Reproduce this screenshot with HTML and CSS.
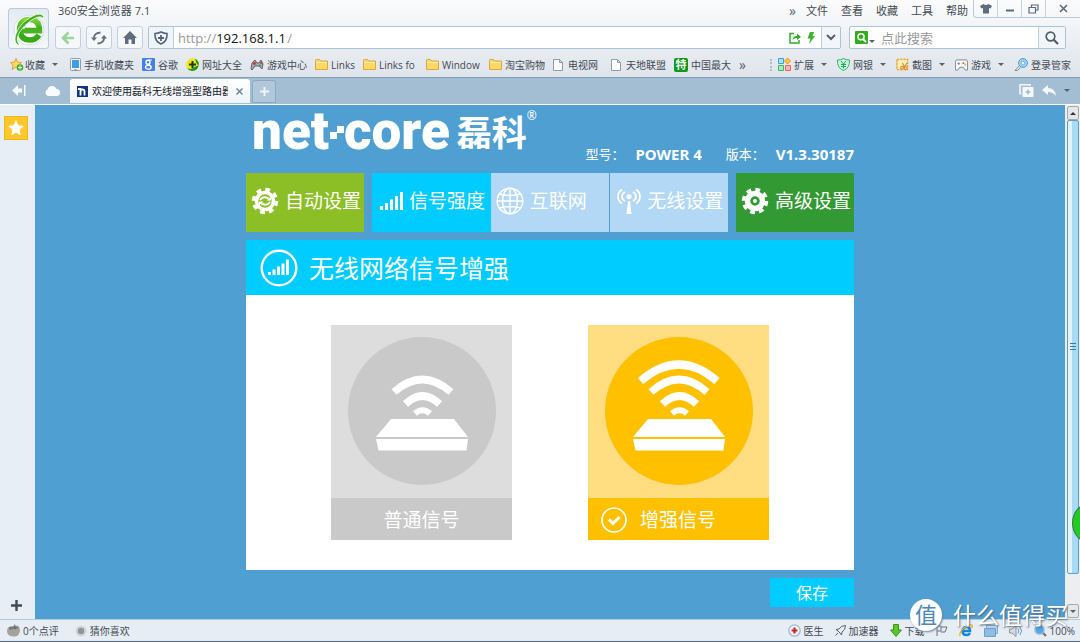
FILE: index.html
```html
<!DOCTYPE html>
<html lang="zh-CN">
<head>
<meta charset="utf-8">
<title>欢迎使用磊科无线增强型路由器</title>
<link rel="stylesheet" href="styles.css">
</head>
<body>
<svg class="defs" aria-hidden="true">
  <symbol id="folder" viewBox="0 0 13 11"><path d="M.5 10.5V1.3Q.5.5 1.300.5H4.500L5.700 2H12.500V10.500Z" fill="#fbd868" stroke="#dda93c"/><path d="M1 3.500H12" stroke="#ffedaa"/></symbol>
  <symbol id="page" viewBox="0 0 10 12"><path d="M.5.5H6.500L9.500 3.500V11.500H.5ZM6.500.5V3.500H9.500" fill="#fdfdfd" stroke="#929aa2"/></symbol>
  <symbol id="router" viewBox="0 0 92 32"><path d="M15 0H78L92 18H0ZM0 20H92L90.500 31.500H2.500Z" fill="#fff"/></symbol>
</svg>

<header class="browser">
  <button class="brand" aria-label="360">
    <svg width="32" height="34" viewBox="0 0 32 34"><defs><linearGradient id="eg" x2="0" y2="1"><stop stop-color="#7fd13a"/><stop offset="1" stop-color="#2fa512"/></linearGradient></defs><circle cx="16" cy="18" r="15" fill="#fff" stroke="#d5dee6"/><path d="M6.500 18.500Q6.500 7.500 16.500 7.500Q26.500 7.500 26.500 18.500H12" fill="none" stroke="url(#eg)" stroke-width="5.500"/><path d="M7 17Q7 28 17 28Q23 28 26 23" fill="none" stroke="#36ab17" stroke-width="5.500"/><path d="M8 19H29" stroke="#48b522" stroke-width="4.500"/><path d="M5 33C-2 29 4 14 15 7C23 1 31 0 31 7C28 3 22 5 15 11C6 18 1 28 7 33Z" fill="#41b01d" stroke="#fff" stroke-width=".8"/></svg>
  </button>
  <div class="title-row">
    <span class="app-title">360安全浏览器 7.1</span>
    <nav class="menu">
      <button class="more">»</button><button>文件</button><button>查看</button><button>收藏</button><button>工具</button><button>帮助</button>
    </nav>
    <div class="window-controls">
      <button aria-label="皮肤"><svg width="12" height="10" viewBox="0 0 12 10"><path d="M0 2L3.500 0Q6 2 8.500 0L12 2L10.500 4.500L9 4V9.500H3V4L1.500 4.500Z" fill="#5d6b7e"/></svg></button>
      <button aria-label="最小化"><svg width="10" height="10" viewBox="0 0 10 10"><path d="M1 6.500H9" stroke="#5d6b7e" stroke-width="2"/></svg></button>
      <button aria-label="还原"><svg width="11" height="10" viewBox="0 0 11 10"><path d="M3.500 3V1H10V6H8M1 3.500H7.500V9H1Z" fill="none" stroke="#5d6b7e" stroke-width="1.200"/></svg></button>
      <button class="close" aria-label="关闭"><svg width="9" height="9" viewBox="0 0 9 9"><path d="M1 1L8 8M8 1L1 8" stroke="#5d6b7e" stroke-width="1.600"/></svg></button>
    </div>
  </div>
  <div class="address-row">
    <button class="tool" aria-label="后退"><svg width="14" height="14" viewBox="0 0 14 14"><path d="M13 7H2M7.500 1.500L2 7L7.500 12.500" fill="none" stroke="#9bd39a" stroke-width="2.600"/></svg></button>
    <button class="tool" aria-label="刷新"><svg width="16" height="14" viewBox="0 0 16 14"><path d="M2.800 8.500Q2.500 1.800 9.500 1.500M13.200 5.500Q13.500 12.200 6.500 12.500" fill="none" stroke="#5f6c7d" stroke-width="1.800"/><path d="M0 6.500H6L3 10ZM10 7.500H16L13 4Z" fill="#5f6c7d"/></svg></button>
    <button class="tool" aria-label="主页"><svg width="14" height="13" viewBox="0 0 14 13"><path d="M7 0L14 7H12V13H8.500V8.500H5.500V13H2V7H0Z" fill="#5f6c7d"/></svg></button>
    <div class="address">
      <span class="shield"><svg width="14" height="14" viewBox="0 0 14 14"><path d="M7 1Q10 2.500 13 2.500Q13.500 10.500 7 13Q.5 10.500 1 2.500Q4 2.500 7 1Z" fill="none" stroke="#55657d" stroke-width="1.600"/><path d="M7 4V10M4 7H10" stroke="#55657d" stroke-width="1.800"/></svg></span>
      <label class="scheme" for="url">http://</label><input id="url" class="url" value="192.168.1.1"><span class="scheme">/</span>
      <span class="address-icons">
        <svg width="12" height="12" viewBox="0 0 12 12"><path d="M5 1.500H1V11H10V8" fill="none" stroke="#33ad28" stroke-width="1.500"/><path d="M3.500 8Q4 4 8 4V1.500L12 5L8 8V6Q5 6 3.500 8Z" fill="#33ad28"/></svg>
        <svg width="8" height="12" viewBox="0 0 8 12"><path d="M3 0H7L5.500 4H8L2 12L3.500 6.500H.5Z" fill="#38b52b"/></svg>
      </span>
      <button class="drop" aria-label="历史地址"><svg width="10" height="7" viewBox="0 0 10 7"><path d="M1 1L5 5L9 1" fill="none" stroke="#4f5f74" stroke-width="2"/></svg></button>
    </div>
    <div class="search">
      <svg width="13" height="13" viewBox="0 0 13 13"><rect width="13" height="13" rx="1" fill="#2fae1c"/><circle cx="6" cy="5.800" r="3" fill="none" stroke="#fff" stroke-width="1.500"/><path d="M8 8L11 11" stroke="#fff" stroke-width="1.800"/></svg>
      <i class="caret low"></i>
      <input aria-label="搜索" placeholder="点此搜索">
      <button aria-label="搜索"><svg width="14" height="14" viewBox="0 0 14 14"><circle cx="5.500" cy="5.500" r="4.300" fill="none" stroke="#4f5d6c" stroke-width="1.700"/><path d="M8.500 8.500L13 13" stroke="#4f5d6c" stroke-width="2.200"/></svg></button>
    </div>
  </div>
</header>

<nav class="bookmarks">
  <a class="fav" href="#"><svg width="14" height="13" viewBox="0 0 14 13"><path d="M6 .5L7.500 4L11.500 4.500L8.500 7L9.500 11L6 9L2 11.500L3 7.500L.5 4.500L4.500 4Z" fill="#ffd75a" stroke="#e0a23a"/><circle cx="10" cy="9.500" r="3.300" fill="#3faf2c"/><path d="M10 7.500V11.500M8 9.500H12" stroke="#fff"/></svg>收藏<i class="caret"></i></a>
  <a href="#"><svg width="11" height="13" viewBox="0 0 11 13"><rect x=".5" y=".5" width="10" height="12" rx="1" fill="#eef4fa" stroke="#8e9daa"/><path d="M2 2H9V10H2Z" fill="#3d9be8"/><path d="M4.500 11.500H6.500" stroke="#8e9daa"/></svg>手机收藏夹</a>
  <a href="#"><svg width="13" height="13" viewBox="0 0 13 13"><rect width="13" height="13" rx="1" fill="#4480e8"/><circle cx="6" cy="4.200" r="2" fill="none" stroke="#fff" stroke-width="1.400"/><ellipse cx="6.300" cy="9.200" rx="2.800" ry="1.900" fill="none" stroke="#fff" stroke-width="1.400"/><path d="M6 2H10M7 6L8 7.500" stroke="#fff"/></svg>谷歌</a>
  <a href="#"><svg width="13" height="13" viewBox="0 0 13 13"><circle cx="6.500" cy="6.500" r="6.300" fill="#f8e21d"/><path d="M9 .7A6.300 6.300 0 0 1 12.500 8Q10 5 9 .7ZM12.500 8A6.300 6.300 0 0 1 1 10Q5 12 8 9.500T12.500 8Z" fill="#149a22"/><path d="M6.500 3V10M3 6.500H10" stroke="#173c13" stroke-width="2"/></svg>网址大全</a>
  <a href="#"><svg width="14" height="12" viewBox="0 0 14 12"><path d="M1 10L2 4L5 1L7 4H9L11 1L13 5L12 10L9 7H5L2 11Z" fill="#a7aaad" stroke="#606468"/><circle cx="4.500" cy="4.500" r="1.400" fill="#c83434"/><circle cx="10" cy="6.500" r="1" fill="#2ba850"/><circle cx="11" cy="4" r="1" fill="#c83434"/></svg>游戏中心</a>
  <a href="#"><svg width="13" height="11"><use href="#folder"/></svg>Links</a>
  <a class="folder" href="#"><svg width="13" height="11"><use href="#folder"/></svg>Links fo</a>
  <a class="folder" href="#"><svg width="13" height="11"><use href="#folder"/></svg>Window</a>
  <a href="#"><svg width="13" height="11"><use href="#folder"/></svg>淘宝购物</a>
  <a class="plain" href="#"><svg width="10" height="12"><use href="#page"/></svg>电视网</a>
  <a class="plain" href="#"><svg width="10" height="12"><use href="#page"/></svg>天地联盟</a>
  <a href="#"><span class="te">特</span>中国最大</a>
  <button class="more">»</button>
  <span class="extensions">
    <i class="grip"></i>
    <a href="#"><svg width="13" height="13" viewBox="0 0 13 13"><path d="M.5.5H5.500V5.500H.5Z" fill="#a9e0fb" stroke="#3aa0d8"/><path d="M9.500 0L12.500 3L9.500 6L6.500 3Z" fill="#ffc24a" stroke="#e79a1f"/><path d="M.5 7.500H5.500V12.500H.5Z" fill="#a5ecb8" stroke="#3bb765"/><path d="M7.500 7.500H12.500V12.500H7.500Z" fill="#ffb0b0" stroke="#e86b6b"/></svg>扩展<i class="caret"></i></a>
    <a href="#"><svg width="13" height="13" viewBox="0 0 13 13"><path d="M6.500.5Q9 2 12.500 2Q13 10 6.500 12.500Q0 10 .5 2Q4 2 6.500.5Z" fill="#c8f5d9" stroke="#35b170"/><path d="M4 3L6.500 6L9 3M6.500 6V10.500M4 6.500H9M4 8.500H9" fill="none" stroke="#25a45e"/></svg>网银<i class="caret"></i></a>
    <a href="#"><svg width="13" height="13" viewBox="0 0 14 13"><path d="M1 1H12.500V12H1Z" fill="#ffedb6" stroke="#eba52e" stroke-width="1.500" stroke-dasharray="2.500 1"/><path d="M7 5L9 9L12 5M5 10A1.500 1.500 0 1 0 8 10A1.500 1.500 0 1 0 5 10M9 10.500A1.500 1.500 0 1 0 12 10.500A1.500 1.500 0 1 0 9 10.500" fill="none" stroke="#d98e35" stroke-width="1.200"/></svg>截图<i class="caret"></i></a>
    <a href="#"><svg width="13" height="12" viewBox="0 0 14 12"><path d="M2 .5H12Q13.500.5 13.500 3V11.500H11L9 8.500H5L3 11.500H.5V3Q.5.500 2 .500Z" fill="#fafafa" stroke="#7d858d"/><path d="M4 3V6M2.500 4.500H5.500" stroke="#888"/><circle cx="9" cy="4" r="1" fill="#e24848"/><circle cx="11" cy="5.500" r="1" fill="#e9a335"/></svg>游戏<i class="caret"></i></a>
    <a href="#"><svg width="14" height="14" viewBox="0 0 14 14"><path d="M5 8L1 12.500H3.500L6.500 9.500" fill="#eee" stroke="#7d8790"/><circle cx="9" cy="5" r="4.400" fill="#a7d7fa" stroke="#4c94ce"/><circle cx="9" cy="5" r="2" fill="#e2f4ff" stroke="#6aaddd"/></svg>登录管家</a>
  </span>
</nav>

<div class="tabs">
  <button aria-label="侧栏"><svg width="14" height="11" viewBox="0 0 14 11"><path d="M0 5.500L6 0V3.500H10V7.500H6V11ZM12 0H13.500V11H12Z" fill="#f8fafc"/></svg></button>
  <button class="cloud" aria-label="云"><svg width="16" height="11" viewBox="0 0 16 11"><path d="M4 11A3.500 3.500 0 0 1 3.500 4.500A4.800 4.800 0 0 1 12.500 4A3.500 3.500 0 0 1 12.500 11Z" fill="#f8fafc"/></svg></button>
  <div class="tab">
    <svg width="11" height="11" viewBox="0 0 11 11"><path d="M0 0H11V11H0Z" fill="#12347f"/><path d="M1 3H3.500V9.500M3.500 5.500Q3.500 3.500 5.500 3.500T7.500 5.500V9.500" fill="none" stroke="#fff" stroke-width="1.800"/></svg>
    <span class="tab-title">欢迎使用磊科无线增强型路由器</span>
    <button aria-label="关闭标签"><svg width="7" height="7" viewBox="0 0 7 7"><path d="M.5.5L6.500 6.500M6.500.5L.5 6.500" stroke="#66809b" stroke-width="1.400"/></svg></button>
  </div>
  <button class="new-tab" aria-label="新标签"><svg width="9" height="9" viewBox="0 0 9 9"><path d="M4.500 0V9M0 4.500H9" stroke="#eef4f9" stroke-width="2"/></svg></button>
  <span class="tab-tools">
    <button aria-label="复制标签"><svg width="15" height="13" viewBox="0 0 15 13"><path d="M2.500 9.500H1V.8H11V2" fill="none" stroke="#f3f7fa" stroke-width="1.600"/><rect x="3.500" y="3" width="11" height="10" rx="1" fill="#f5f8fa"/><path d="M9 5.500V10.500M6.500 8H11.500" stroke="#86a0b6"/></svg></button>
    <button aria-label="撤销关闭"><svg width="14" height="11" viewBox="0 0 14 11"><path d="M0 5L6 0V3Q13 3 14 11Q11 7 6 7V10Z" fill="#f5f8fa"/></svg></button>
    <i class="caret"></i>
  </span>
</div>

<div class="viewport">
  <aside class="sidebar">
    <button class="star" aria-label="收藏夹"><svg width="16" height="16" viewBox="0 0 16 16"><path d="M8 0L10.300 5.300L16 5.900L11.700 9.700L13 15.500L8 12.500L3 15.500L4.300 9.700L0 5.900L5.700 5.300Z" fill="#fff"/></svg></button>
    <button class="add" aria-label="添加"><svg width="11" height="11" viewBox="0 0 11 11"><path d="M5.500 0V11M0 5.500H11" stroke="#414b55" stroke-width="2.400"/></svg></button>
  </aside>
  <main class="page">
    <div class="content">
      <header class="site-head">
        <h1 class="logo"><span>net</span><svg width="15" height="13" viewBox="0 0 15 13"><path d="M1 6H8V13H1ZM8 0H15V7H8Z" fill="#fff"/></svg><span>core</span><span class="logo-cn">磊科</span><sup>®</sup></h1>
        <p class="info"><span>型号：</span><b>POWER 4</b><span class="version">版本：</span><b>V1.3.30187</b></p>
      </header>
      <nav class="nav">
        <a class="auto" href="#"><svg width="28" height="28" viewBox="0 0 28 28"><circle cx="14" cy="14" r="11.500" fill="none" stroke="#fff" stroke-width="3.500" stroke-dasharray="4.800 4.230"/><circle cx="14" cy="14" r="8.500" fill="none" stroke="#fff" stroke-width="3.600"/><path d="M9 13Q12 8.500 17.500 11.500M19 15Q16 19.500 10.500 16.500" fill="none" stroke="#fff" stroke-width="2"/><path d="M15.500 13.500H20V9.500ZM12.500 14.500H8V18.500Z" fill="#fff"/></svg>自动设置</a>
        <div class="nav-group">
          <a class="signal" href="#"><svg width="23" height="18" viewBox="0 0 23 18"><path d="M0 14H3V18H0ZM5 11H8V18H5ZM10 7.500H13V18H10ZM15 4H18V18H15ZM20 0H23V18H20Z" fill="#fff"/></svg>信号强度</a>
          <a class="internet" href="#"><svg width="28" height="28" viewBox="0 0 28 28"><g fill="none" stroke="#fff" stroke-width="1.500"><circle cx="14" cy="14" r="12.800"/><ellipse cx="14" cy="14" rx="7.500" ry="12.800"/><path d="M14 1V27M1 14H27M3.500 7Q14 10 24.500 7M3.500 21Q14 18 24.500 21"/></g></svg>互联网</a>
          <a class="wireless" href="#"><svg width="24" height="26" viewBox="0 0 24 26"><g fill="none" stroke="#fff" stroke-width="1.700"><path d="M5 1.500Q1 4 1 8.500T5 15.500M19 1.500Q23 4 23 8.500T19 15.500M8 4Q5 5.500 5 8.500T8 13M16 4Q19 5.500 19 8.500T16 13"/></g><circle cx="12" cy="8.500" r="2.500" fill="#fff"/><path d="M11 13H13L14.500 26H9.500Z" fill="#fff"/></svg>无线设置</a>
        </div>
        <a class="advanced" href="#"><svg width="28" height="28" viewBox="0 0 28 28"><circle cx="14" cy="14" r="11.500" fill="none" stroke="#fff" stroke-width="3.500" stroke-dasharray="4.800 4.230"/><circle cx="14" cy="14" r="7.500" fill="none" stroke="#fff" stroke-width="5.500"/><circle cx="14" cy="14" r="2" fill="#fff"/></svg>高级设置</a>
      </nav>
      <section class="panel">
        <h2><svg width="38" height="38" viewBox="0 0 38 38"><circle cx="19" cy="19" r="17.300" fill="none" stroke="#fff" stroke-width="2.400"/><path d="M8 23H11V26H8ZM12.500 20.500H15.500V26H12.500ZM17 17.500H20V26H17ZM21.500 14.500H24.500V26H21.500ZM26 10.500H29V26H26Z" fill="#fff"/></svg>无线网络信号增强</h2>
        <form id="mode" class="choices">
          <label class="card normal">
            <input type="radio" name="signal">
            <span class="art"><svg width="148" height="148" viewBox="0 0 148 148"><circle cx="74" cy="74" r="74" fill="#c9c9c9"/><g fill="none" stroke="#fff"><path d="M46 55Q74 30 103 55" stroke-width="7.500"/><path d="M57.500 67Q74.500 51 91.500 67" stroke-width="7.500"/><path d="M67 76.500Q74.500 70 82 76.500" stroke-width="6"/></g><use href="#router" x="28" y="82" width="92" height="32"/></svg></span>
            <span class="caption">普通信号</span>
          </label>
          <label class="card boost">
            <input type="radio" name="signal" checked>
            <span class="art"><svg width="148" height="148" viewBox="0 0 148 148"><circle cx="74" cy="74" r="74" fill="#ffc000"/><g fill="none" stroke="#fff"><path d="M35.500 44Q74 11 112 44" stroke-width="8"/><path d="M46 55Q74 30 102 55" stroke-width="7.500"/><path d="M57.500 67Q74.500 51 91.500 67" stroke-width="7.500"/><path d="M67 76.500Q74.500 70 82 76.500" stroke-width="6"/></g><use href="#router" x="28" y="82" width="92" height="32"/></svg></span>
            <span class="caption"><svg width="26" height="26" viewBox="0 0 26 26"><circle cx="13" cy="13" r="12" fill="none" stroke="#fff" stroke-width="1.700"/><path d="M8 12.500L12 16.500L18.500 10" fill="none" stroke="#fff" stroke-width="3"/></svg>增强信号</span>
          </label>
        </form>
      </section>
      <button class="save" form="mode" type="button">保存</button>
    </div>
  </main>
  <div class="scrollbar">
    <button aria-label="向上"><i class="caret up"></i></button>
    <div class="thumb"><i></i></div>
    <div class="track"></div>
    <button aria-label="向下"><i class="caret"></i></button>
  </div>
</div>

<footer class="status">
  <a href="#"><svg width="13" height="13" viewBox="0 0 13 13"><path d="M6.500 2Q13 0 13 7Q12 13 6.500 12.500Q0 12 0 7Q0 2 6.500 2Z" fill="#a4a29f"/><path d="M2 3L6 3.500L8 0L8.500 3L12 3L8 5.500L6 4.500L3 6Z" fill="#6e706c"/></svg>0个点评</a>
  <a href="#"><svg width="12" height="12" viewBox="0 0 12 12"><circle cx="6" cy="6" r="5.500" fill="#d1d5d9"/><circle cx="6" cy="6" r="3.200" fill="#8f959a"/></svg>猜你喜欢</a>
  <span class="status-right">
    <a href="#"><svg width="13" height="13" viewBox="0 0 13 13"><circle cx="6.500" cy="6.500" r="5.600" fill="#f5fafe" stroke="#a7bfd2" stroke-width="1.500"/><path d="M6.500 3.500V9.500M3.500 6.500H9.500" stroke="#cf2424" stroke-width="2.200"/></svg>医生</a>
    <a href="#"><svg width="11" height="11" viewBox="0 0 11 11"><path d="M10.500.5Q6 .5 4 4L1 4.500L3 6L5 8L6.500 10L7 7Q10.500 5 10.500.5ZM3 8L.5 10.500" fill="none" stroke="#56616c"/></svg>加速器</a>
    <a href="#"><svg width="12" height="13" viewBox="0 0 12 13"><path d="M3.500.5H8.500V6H11.500L6 12.500L.5 6H3.500Z" fill="#5cc52b" stroke="#359914"/></svg>下载</a>
    <a href="#" aria-label="标记"><svg width="12" height="11" viewBox="0 0 12 11"><path d="M1 11V1H5V6H1M5 2H11L9 7H5" fill="none" stroke="#687480"/></svg></a>
    <a href="#" aria-label="浏览器"><svg width="14" height="13" viewBox="0 0 14 13"><path d="M3.500 7H11Q11 3 7.500 3T3.500 7Q3.500 11 7.500 11Q10 11 11 9" fill="none" stroke="#1686d8" stroke-width="2.500"/><path d="M1 12Q0 8 5 4T13 1Q14 3 12 4" fill="none" stroke="#efb224" stroke-width="1.300"/></svg></a>
    <a href="#" aria-label="窗口"><svg width="14" height="12" viewBox="0 0 14 12"><path d="M2.500.5H13.500V8.500H2.500Z" fill="#b7d5ee" stroke="#7fa9cb"/><path d="M.5 3.500H11.500V11.500H.5Z" fill="#8ebde4" stroke="#6f9fc6"/></svg></a>
    <a href="#" aria-label="声音"><svg width="14" height="12" viewBox="0 0 14 12"><path d="M.5 4H3L7 .5V11.500L3 8H.5Z" fill="#d7dbe0" stroke="#8c959e"/><path d="M9 3.500Q10.500 6 9 8.500M11 2Q14 6 11 10" fill="none" stroke="#5d9cdc"/></svg></a>
    <a href="#"><svg width="13" height="13" viewBox="0 0 13 13"><path d="M8 8L12 12" stroke="#727b84" stroke-width="2.400"/><circle cx="5.500" cy="5.500" r="4.500" fill="#4da6f0" stroke="#a3b5c4" stroke-width="1.500"/></svg>100%</a>
  </span>
</footer>

<div class="assist"></div>
<div class="watermark"><span class="seal">值</span><span>什么值得买</span></div>
</body>
</html>
```

FILE: styles.css
```css
* { box-sizing: border-box; }

body {
  margin: 0;
  min-height: 100vh;
  display: flex;
  flex-direction: column;
  overflow: hidden;
  position: relative;
  font-family: "Open Sans", "Noto Sans CJK SC", sans-serif;
  font-size: 10px;
  line-height: 16px;
  color: #424a53;
  background: #e7edf5;
}

button, input { font: inherit; color: inherit; margin: 0; padding: 0; border: 0; background: none; }
button { display: flex; align-items: center; justify-content: center; }
a { color: inherit; text-decoration: none; }
svg { display: block; flex: none; }
h1, h2, p { margin: 0; }
.defs { position: absolute; width: 0; height: 0; }

.caret {
  flex: none;
  border: 3px solid transparent;
  border-top: 3px solid #59636e;
  border-bottom: 0;
}
.caret.up { border-top: 0; border-bottom: 3px solid #333; }
.caret.low { margin-top: 8px; }

/* window frame */
.browser {
  display: grid;
  grid-template-columns: 41px 1fr;
  grid-template-rows: 26px 24px;
  column-gap: 6px;
  padding-left: 8px;
  background: linear-gradient(#fcfcfd, #e8ecf1);
}
.brand {
  grid-row: 1 / 3;
  align-self: end;
  height: 41px;
  margin-bottom: 1px;
  border: 1px solid #b8cbdc;
  border-radius: 3px;
  background: linear-gradient(#e3ebf2, #f3f6f9);
}
.title-row { display: flex; justify-content: space-between; align-items: flex-start; font-size: 11px; }
.app-title { margin: 3px auto 0 3px; }
.menu { display: flex; gap: 13px; margin: 3px 5px 0 0; }
.more { color: #56606b; font-size: 14px; }
.menu .more { margin-right: -3px; }
.window-controls {
  display: flex;
  height: 18px;
  border: solid #b9cbdb;
  border-width: 0 0 1px 1px;
  border-radius: 0 0 0 4px;
}
.window-controls button { width: 24px; border-right: 1px solid #c4d3e0; }
.window-controls .close { width: 34px; border-right: 0; }

.address-row { display: flex; gap: 5px; height: 23px; padding-right: 14px; }
.tool {
  width: 26px;
  border: 1px solid #bfd0de;
  border-radius: 3px;
  background: #f5f7f9;
}
.address, .search {
  display: flex;
  align-items: center;
  min-width: 0;
  border: 1px solid #a9c4d9;
  border-radius: 2px;
  background: #fff;
}
.address { flex: 1; font-size: 13px; }
.shield {
  align-self: stretch;
  display: flex;
  align-items: center;
  padding: 0 5px;
  margin-right: 4px;
  border-right: 1px solid #b9cede;
  background: #eff4f8;
}
.scheme { color: #999; }
.url { width: 71px; height: 21px; color: #111; }
.address-icons { display: flex; gap: 6px; margin: 0 6px 0 auto; }
.drop { align-self: stretch; width: 19px; border-left: 1px solid #b9cede; background: #f3f6f9; }
.search { flex: 0 0 217px; margin-left: 3px; padding-left: 5px; gap: 1px; font-size: 13px; }
.search input { flex: 1; min-width: 0; margin-left: 5px; height: 21px; }
.search input::placeholder { color: #999; opacity: 1; }
.search button { align-self: stretch; width: 27px; border-left: 1px solid #b9cede; background: #f3f6f9; }

/* bookmarks */
.bookmarks {
  display: flex;
  align-items: center;
  gap: 8px;
  height: 27px;
  padding: 2px 9px 0 10px;
  white-space: nowrap;
  background: linear-gradient(#e8ecf1, #dfe5ec);
}
.bookmarks a { display: flex; align-items: center; gap: 3px; }
.bookmarks .fav { gap: 1px; margin-right: 4px; }
.bookmarks .caret { margin-left: 4px; }
.bookmarks .fav .caret { margin-left: 6px; }
.bookmarks .folder { min-width: 55px; }
.bookmarks .plain { gap: 5px; min-width: 50px; }
.te {
  width: 14px;
  height: 14px;
  border-radius: 2px;
  background: #0b9a16;
  color: #fff;
  font-size: 11px;
  font-weight: bold;
  line-height: 13px;
  text-align: center;
}
.extensions { display: flex; align-items: center; gap: 10px; margin-left: auto; }
.grip { width: 2px; height: 12px; margin-right: -4px; border-left: 2px dotted #b4bdc7; }

/* tab strip */
.tabs {
  display: flex;
  align-items: center;
  height: 28px;
  padding: 0 10px 1px 12px;
  border-top: 1px solid #7f9fb9;
  border-bottom: 1px solid #fff;
  background: #a3bdd3;
}
.cloud { margin: 0 10px 0 18px; }
.tab {
  display: flex;
  align-items: center;
  align-self: flex-end;
  gap: 4px;
  width: 180px;
  height: 24px;
  padding: 0 7px;
  border-radius: 3px 3px 0 0;
  background: linear-gradient(#fff, #edf3f8);
  color: #16202a;
}
.tab-title { flex: 1; margin-right: 4px; overflow: hidden; white-space: nowrap; }
.new-tab {
  align-self: flex-end;
  width: 24px;
  height: 23px;
  margin-left: 2px;
  border: 1px solid #8da9c1;
  border-radius: 3px 3px 0 0;
  background: #b1c8da;
}
.tab-tools { display: flex; align-items: center; gap: 8px; margin-left: auto; }

/* viewport */
.viewport { flex: 1; display: flex; }
.sidebar {
  flex: none;
  width: 35px;
  display: flex;
  flex-direction: column;
  align-items: center;
  justify-content: space-between;
  padding: 11px 3px 8px 0;
  background: #e7eef6;
}
.star { width: 24px; height: 24px; border: 1px solid #f0b71f; background: #ffc72c; }
.page { flex: 1; background: #4f9fd3; color: #fff; }
.content { width: 608px; max-width: 100%; margin: 0 auto; }

.site-head { display: flex; align-items: flex-start; justify-content: space-between; height: 68px; }
.logo {
  display: flex;
  align-items: center;
  height: 52px;
  margin: 0 -60px 0 6px;
  font: 900 53px/52px Roboto, sans-serif;
}
.logo svg { margin-top: 2px; }
.logo-cn { margin-left: 7px; font: bold 35px/50px "Noto Sans CJK SC", sans-serif; }
.logo sup { align-self: flex-start; font: 12px/22px "Noto Sans", sans-serif; }
.info { display: flex; align-self: flex-end; align-items: center; height: 20px; margin-bottom: 9px; font-size: 13px; white-space: nowrap; }
.info b { font-family: "Noto Sans", sans-serif; font-size: 15px; margin-left: 11px; }
.version { margin-left: 24px; }

.nav { display: grid; grid-template-columns: 118fr 356fr 118fr; gap: 8px; height: 59px; font-size: 19px; }
.nav-group { display: grid; grid-template-columns: repeat(3, 1fr); }
.nav a { display: flex; align-items: center; gap: 6px; padding: 0 0 4px 5px; white-space: nowrap; }
.nav .auto { background: #8cbe26; }
.nav .signal { padding-left: 8px; background: #0cf; }
.nav .internet { background: #b2d8f6; }
.nav .wireless { padding-left: 7px; border-left: 1px solid #4f9fd3; background: #b2d8f6; }
.nav .advanced { background: #393; }

.panel { margin-top: 8px; background: #fff; }
.panel h2 {
  display: flex;
  align-items: center;
  gap: 11px;
  height: 55px;
  padding-left: 14px;
  background: #0cf;
  font-size: 25px;
  font-weight: 400;
}
.choices { display: flex; justify-content: center; gap: 76px; padding: 30px 0; }
.card { width: 181px; }
.card input { position: absolute; opacity: 0; }
.art { display: flex; justify-content: center; padding: 12px 0 13px; }
.caption { display: flex; align-items: center; justify-content: center; gap: 13px; height: 42px; padding-top: 2px; font-size: 19px; }
.normal .art { background: #ddd; }
.normal .caption { background: #c9c9c9; }
.boost .art { background: #ffdd80; }
.boost .caption { justify-content: flex-start; padding-left: 13px; background: #ffc000; }
.save { width: 84px; height: 29px; margin: 8px 0 12px auto; background: #0cf; font-size: 16px; }

/* scrollbar */
.scrollbar { flex: none; width: 15px; display: flex; flex-direction: column; padding: 1px 1px 1px 2px; background: #eceef0; }
.scrollbar button { height: 14px; border: 1px solid #a5aaaf; border-radius: 2px; background: #e6e7e9; }
.thumb {
  flex: 15;
  display: flex;
  align-items: center;
  justify-content: center;
  border: 1px solid #5f9ec2;
  border-radius: 2px;
  background: linear-gradient(90deg, #e3f3fc 40%, #a7daf4 40%);
}
.thumb i { width: 6px; height: 7px; background: repeating-linear-gradient(#347e9c 0 1px, transparent 1px 3px); }
.track { flex: 1; }

/* status bar */
.status {
  display: flex;
  align-items: center;
  gap: 16px;
  height: 23px;
  padding: 0 5px 0 7px;
  border-top: 1px solid #b5cadd;
  border-bottom: 1px solid #53667a;
  background: #e7edf5;
}
.status a { display: flex; align-items: center; gap: 3px; }
.status-right { display: flex; align-items: center; gap: 11px; margin-left: auto; }

/* overlays */
.assist {
  position: absolute;
  right: -28px;
  top: 503px;
  width: 36px;
  height: 40px;
  border: 1px solid #3c7841;
  border-radius: 50%;
  background: #25c922;
}
.watermark {
  position: absolute;
  right: 12px;
  bottom: 11px;
  display: flex;
  align-items: center;
  gap: 11px;
  color: #fff;
  font-size: 23px;
  line-height: 24px;
  text-shadow: 1px 1px 2px #4b6578;
}
.seal {
  width: 32px;
  height: 32px;
  border-radius: 50%;
  background: #fff;
  color: #4d87b3;
  font-size: 22px;
  line-height: 31px;
  text-align: center;
  text-shadow: none;
  box-shadow: 1px 1px 2px #6b8599;
}
```
